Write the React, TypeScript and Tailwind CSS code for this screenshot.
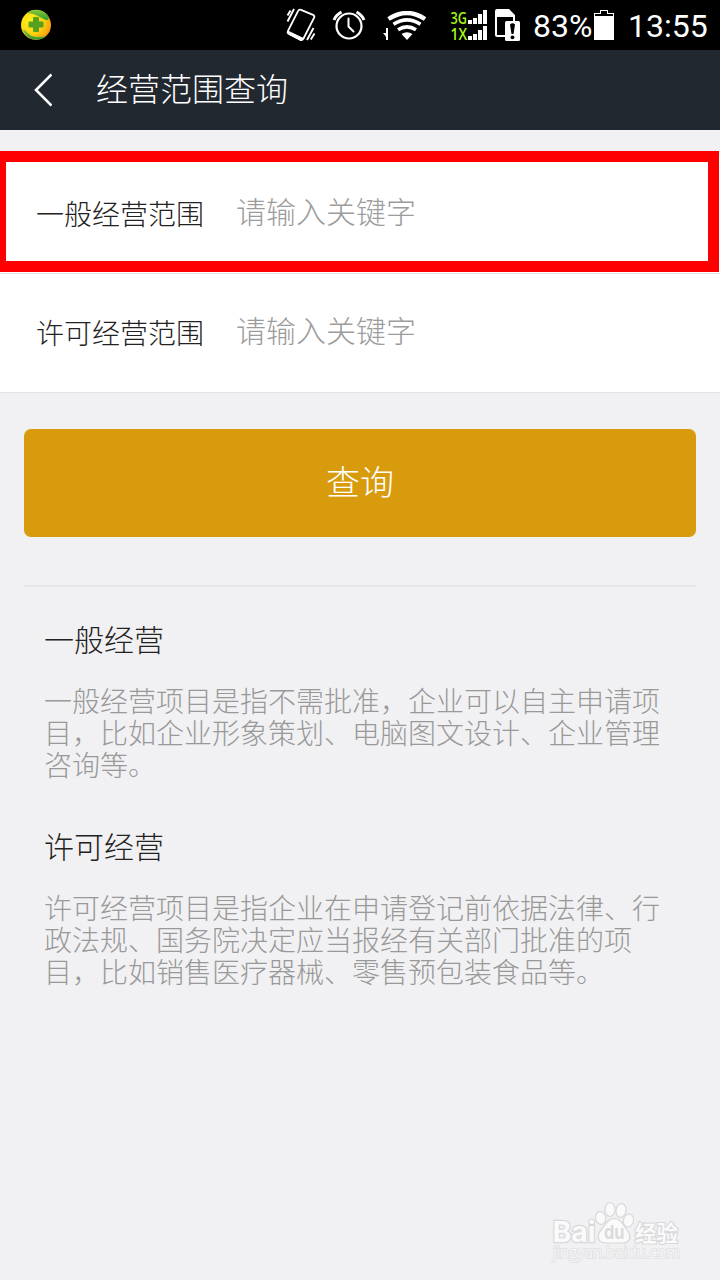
import React from "react";

const cjk = "font-['Noto_Sans_CJK_SC',sans-serif]";

function SafetyIcon() {
  return (
    <svg width="32" height="32" viewBox="0 0 32 32">
      <defs>
        <radialGradient id="ball" cx="0.3" cy="0.35" r="0.75">
          <stop offset="0" stopColor="#fff21a" />
          <stop offset="0.6" stopColor="#fcd20f" />
          <stop offset="1" stopColor="#f79a12" />
        </radialGradient>
        <linearGradient id="leaf" x1="0" y1="0" x2="0" y2="1">
          <stop offset="0" stopColor="#8cc63c" />
          <stop offset="1" stopColor="#2f9a2b" />
        </linearGradient>
      </defs>
      <circle cx="16" cy="16" r="15" fill="url(#ball)" />
      <path d="M7 4C12-.5 22-.5 27.500 6C29 8 29 10 28 11C23 12 20 5 7 4Z" fill="url(#leaf)" />
      <path d="M3 21C6 19 7 26 14 27.500C18 28.500 22 28 26 27C20 32.500 8 33 3 21Z" fill="url(#leaf)" />
      <path
        d="M14 8h4a1 1 0 0 1 1 1v3.500h3.500a1 1 0 0 1 1 1v4a1 1 0 0 1-1 1H19V22a1 1 0 0 1-1 1h-4a1 1 0 0 1-1-1v-3.500H9.500a1 1 0 0 1-1-1v-4a1 1 0 0 1 1-1H13V9a1 1 0 0 1 1-1Z"
        fill="#569f20"
      />
    </svg>
  );
}

function VibrateIcon() {
  return (
    <svg width="32" height="36" viewBox="0 0 32 36" fill="none" stroke="#fff">
      <path d="M16 2.800L28 7.800Q30 8.800 29 10.800L18.500 31.500Q17.300 33.800 15 32.800L4 27Q2 26 3 23.800L13 4.200Q14 2 16 2.800Z" strokeWidth="1.800" />
      <path d="M2.800 24L18.500 31.500Q17.300 33.800 15 32.800L4 27.300Q2 26 2.800 24Z" fill="#fff" />
      <path d="M2.500 8.500L5.500 3.500M2.500 14.500L9 2M22 33L28.500 21M25.800 32.500L29.500 26.500" strokeWidth="1.900" />
    </svg>
  );
}

function AlarmIcon() {
  return (
    <svg width="34" height="32" viewBox="0 0 34 32" fill="none" stroke="#fff" strokeLinecap="round">
      <circle cx="17" cy="17" r="12.500" strokeWidth="2.200" />
      <path d="M16.500 9.500V17.500L21.500 22.500" strokeWidth="2" />
      <path d="M2 11Q4 6 9.500 3M24.500 3Q30 6 32 11" strokeWidth="3" strokeLinecap="butt" />
    </svg>
  );
}

function WifiIcon() {
  return (
    <svg width="44" height="32" viewBox="0 0 44 32" fill="none" stroke="#fff">
      <path d="M4 17V29" strokeWidth="2" />
      <path d="M0 22L4 22V27Z" fill="#fff" stroke="none" />
      <path d="M5.500 8Q24 -4 42 8" strokeWidth="4.400" />
      <path d="M10.500 13.300Q24 4.500 37.500 13.300" strokeWidth="3.600" />
      <path d="M15 18.700Q24 13 33 18.700" strokeWidth="3.600" />
      <path d="M18.500 23Q24 19.500 29.500 23L24 29Z" fill="#fff" stroke="none" />
    </svg>
  );
}

function SignalIcon() {
  return (
    <svg width="38" height="32" viewBox="0 0 38 32" fill="#fff">
      <g fill="#a4f813" fontFamily="Open Sans, sans-serif" fontSize="16" fontWeight="600">
        <text x="0.500" y="13.700" textLength="16.500" lengthAdjust="spacingAndGlyphs">3G</text>
        <text x="0.500" y="29.700" textLength="16.500" lengthAdjust="spacingAndGlyphs">1X</text>
      </g>
      <path
        transform="translate(18 0)"
        shapeRendering="crispEdges"
        d="M0 10h4v4H0zM5 8h4v6H5zM10 4h4v10h-4zM15 0h4v14h-4zM0 26h4v4H0zM5 24h4v6H5zM10 20h4v10h-4zM15 16h4v14h-4z"
      />
    </svg>
  );
}

function SimAlertIcon() {
  return (
    <svg width="25" height="32" viewBox="0 0 25 32">
      <path d="M2 0H14L20 6V12H18V8H2V26H10V28H2Q0 28 0 26V2Q0 0 2 0Z" fill="#fff" />
      <rect x="10" y="12" width="15" height="20" rx="1.500" fill="#fff" />
      <path d="M15 15.500Q17.500 13 20 15.500L18.500 25H16.500Z" fill="#000" />
      <circle cx="17.500" cy="28.300" r="1.900" fill="#000" />
    </svg>
  );
}

function BatteryIcon() {
  return (
    <svg width="20" height="30" viewBox="0 0 20 30" shapeRendering="crispEdges">
      <path d="M.5 29.500V3.500H6.500V.5H13.500V3.500H19.500V29.500Z" fill="#000" stroke="#fff" />
      <path d="M0 6h20v24H0z" fill="#fff" />
    </svg>
  );
}

function StatusBar() {
  return (
    <div className="flex h-[50px] items-start bg-black pl-5 font-normal text-white">
      <div className="mt-[9px] w-[265px]"><SafetyIcon /></div>
      <div className="mt-[7px] w-[47px]"><VibrateIcon /></div>
      <div className="mt-[9px] w-[51px]"><AlarmIcon /></div>
      <div className="mt-[11px] w-[67px]"><WifiIcon /></div>
      <div className="mt-[10px] w-[45px]"><SignalIcon /></div>
      <div className="mt-[9px] w-[38px]"><SimAlertIcon /></div>
      <div className="mt-[8px] w-[61px] font-[Roboto,sans-serif] text-[32px] leading-9 whitespace-nowrap">83%</div>
      <div className="mt-[10px] w-[34px]"><BatteryIcon /></div>
      <div className="mt-[8px] font-[Roboto,sans-serif] text-[32px] leading-9">13:55</div>
    </div>
  );
}

function Field({ label }: { label: string }) {
  return (
    <label className="flex h-[119px] items-center border-b border-[#e3e3e5] bg-white pl-9">
      <span className="w-[200px] pb-[3px] text-[28px] text-[#222]">{label}</span>
      <input
        className="w-[440px] bg-transparent pb-[7px] text-[30px] font-light outline-none placeholder:text-[#9c9c9c]"
        placeholder="请输入关键字"
      />
    </label>
  );
}

function Note({ title, lines }: { title: string; lines: string[] }) {
  return (
    <section>
      <h2 className="text-[30px] leading-[44px] text-[#222]">{title}</h2>
      <p className="mt-6 text-[28px] leading-8 text-[#999]">
        {lines.map((line) => (
          <span key={line} className="block whitespace-nowrap">{line}</span>
        ))}
      </p>
    </section>
  );
}

function Watermark() {
  return (
    <svg className="absolute top-[1198px] left-[548px]" width="136" height="70" viewBox="0 0 136 70" fill="#fafafb" stroke="#d8d8da" strokeWidth="1.200">
      <text x="4.500" y="44" fontFamily="Inter, sans-serif" fontWeight="700" fontSize="28" textLength="43" lengthAdjust="spacingAndGlyphs" paintOrder="stroke" strokeWidth="2.400">Bai</text>
      <ellipse cx="52.700" cy="20" rx="5" ry="6.500" transform="rotate(-12 52.700 20)" />
      <ellipse cx="62" cy="11.500" rx="5" ry="7" />
      <ellipse cx="73" cy="12.500" rx="5" ry="7" transform="rotate(10 73 12.500)" />
      <ellipse cx="80.500" cy="22.500" rx="5" ry="6.500" transform="rotate(15 80.500 22.500)" />
      <path d="M66 20.500C73 20.500 75 27 79 32C84 38 82 45 75 45H58C50 45 48 38 53 32C57 28 59 20.500 66 20.500Z" />
      <text x="56" y="41" fontFamily="Inter, sans-serif" fontWeight="700" fontSize="19" textLength="20.500" lengthAdjust="spacingAndGlyphs" fill="#dadadc" stroke="none">du</text>
      <text x="87" y="43" fontFamily="Noto Sans CJK SC, sans-serif" fontWeight="700" fontSize="21.500" paintOrder="stroke" strokeWidth="2.200">经验</text>
      <text x="5" y="60" fontFamily="Open Sans, sans-serif" fontSize="16" textLength="127" lengthAdjust="spacingAndGlyphs" paintOrder="stroke" strokeWidth="2" stroke="#e2e2e4">jingyan.baidu.com</text>
    </svg>
  );
}

export default function App() {
  return (
    <div className={`relative h-[1280px] w-[720px] overflow-hidden bg-[#f1f1f3] font-light ${cjk}`}>
      <StatusBar />
      <header className="flex h-20 items-center bg-[#22282f] text-white">
        <svg className="mr-11 ml-[34px]" width="18" height="34" viewBox="0 0 18 34" fill="none" stroke="#fff" strokeWidth="2.600">
          <path d="M17.500 1.500L2 17L17.500 32.500" />
        </svg>
        <h1 className="-mt-[7px] text-[32px]">经营范围查询</h1>
      </header>
      <form className="mt-6" onSubmit={(e) => e.preventDefault()}>
        <div className="border-t border-[#e3e3e5]">
          <Field label="一般经营范围" />
          <Field label="许可经营范围" />
        </div>
        <button className="mx-6 mt-9 flex h-[108px] w-[672px] items-center justify-center rounded-[7px] bg-[#d89b0d] pb-[5px] text-[34px] text-white">
          查询
        </button>
      </form>
      <div className="mx-6 mt-12 border-t-2 border-[#e6e6e8] px-5 pt-[29px]">
        <Note
          title="一般经营"
          lines={["一般经营项目是指不需批准，企业可以自主申请项", "目，比如企业形象策划、电脑图文设计、企业管理", "咨询等。"]}
        />
        <div className="h-[43px]" />
        <Note
          title="许可经营"
          lines={["许可经营项目是指企业在申请登记前依据法律、行", "政法规、国务院决定应当报经有关部门批准的项", "目，比如销售医疗器械、零售预包装食品等。"]}
        />
      </div>
      <div className="pointer-events-none absolute top-[151px] left-0 h-[121px] w-[719px] border-[11px] border-l-[6px] border-[#ff0000]" />
      <Watermark />
    </div>
  );
}
